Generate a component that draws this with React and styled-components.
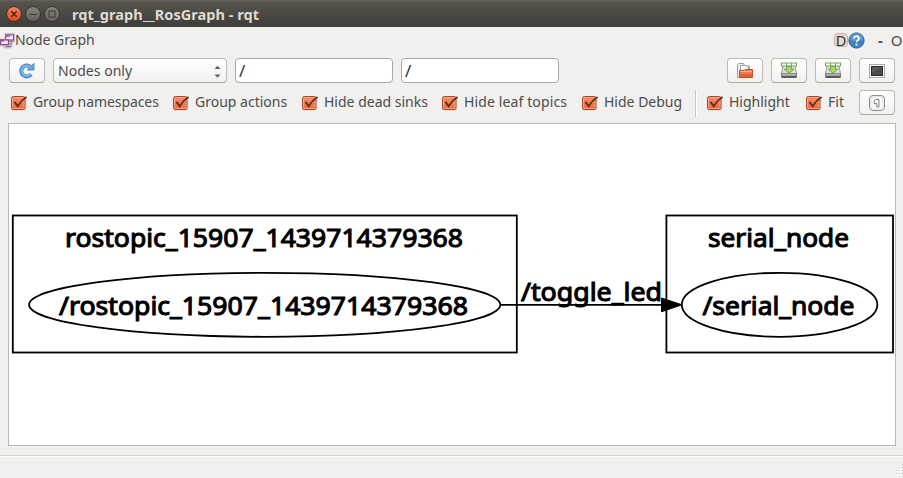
import React from "react";
import styled, { createGlobalStyle } from "styled-components";

const Global = createGlobalStyle`
  * { box-sizing: border-box; }
  html, body { margin: 0; padding: 0; overflow: hidden; background: #f1f0ee; }
  body { font-family: "Noto Sans", "Open Sans", sans-serif; font-size: 14px; color: #4c4c4c; }
`;

const Window = styled.div`
  width: 903px;
  height: 478px;
  display: flex;
  flex-direction: column;
  background: #f1f0ee;
  overflow: hidden;
`;

const TitleBar = styled.header`
  height: 27px;
  flex: none;
  display: flex;
  align-items: center;
  padding: 0 0 0 6px;
  background: linear-gradient(#62605a 0, #56544c 2px, #3e3d39 100%);
`;

const WindowButtons = styled.div`
  display: flex;
  gap: 3px;
  margin-right: 12px;
`;

const RoundButton = styled.span`
  width: 16px;
  height: 16px;
  display: grid;
  place-items: center;
  border-radius: 50%;
  border: 1px solid #35342f;
  background: ${(p) => (p.$close ? "linear-gradient(#f4805a, #dd4a1d)" : "linear-gradient(#85837c, #65635c)")};
`;

const Title = styled.h1`
  margin: 0;
  font-size: 14.5px;
  line-height: 26px;
  font-weight: 700;
  letter-spacing: ${(p) => p.$spacing}px;
  color: #dfdbd2;
  white-space: pre;
`;

const DockBar = styled.div`
  height: 27px;
  flex: none;
  display: flex;
  align-items: center;
  white-space: nowrap;
`;

const DockTitle = styled.span`
  flex: 1;
  line-height: 26px;
  padding-bottom: 2px;
  letter-spacing: ${(p) => p.$spacing}px;
`;

const DockControls = styled.div`
  display: flex;
  align-items: center;
  width: 69px;
  line-height: 24px;
  padding-bottom: 1px;
`;

const ReloadBadge = styled.span`
  width: 14px;
  height: 14px;
  border: 1px solid #c5aea2;
  border-radius: 4px;
  background: #ead8ce;
  font-size: 14.5px;
  line-height: 12px;
  display: flex;
  justify-content: center;
  color: #333;
`;

const DockText = styled.span`
  margin-left: ${(p) => p.$gap}px;
  font-size: 15px;
  font-weight: ${(p) => (p.$bold ? 700 : 400)};
`;

const Toolbar = styled.div`
  height: 33px;
  flex: none;
  display: flex;
  align-items: flex-start;
  padding: 4px 8px 0 9px;
`;

const Spacer = styled.div`
  flex: 1;
`;

const Button = styled.button`
  width: 36px;
  height: 25px;
  flex: none;
  display: grid;
  place-items: center;
  padding: 0;
  margin-left: ${(p) => p.$gap || 0}px;
  border: 1px solid #bdbbb7;
  border-bottom-color: #aaa8a4;
  border-radius: 4px;
  background: linear-gradient(#ffffff, #f1f1f0);
`;

const Combo = styled.div`
  width: 174px;
  height: 25px;
  margin-left: 8px;
  padding: 0 5px 0 4px;
  display: flex;
  align-items: center;
  justify-content: space-between;
  border: 1px solid #bdbbb7;
  border-bottom-color: #aaa8a4;
  border-radius: 4px;
  background: linear-gradient(#ffffff, #f0f0ef);
  line-height: 23px;
  letter-spacing: 0.03px;
`;

const TextInput = styled.input`
  width: 158px;
  height: 25px;
  margin-left: 8px;
  padding: 0 3px;
  border: 1px solid #a9a7a2;
  border-radius: 4px;
  background: #fff;
  font: 17px "Noto Sans", sans-serif;
  color: #333;
  outline: none;
`;

const OptionsRow = styled.div`
  height: 36px;
  flex: none;
  display: flex;
  align-items: flex-start;
  padding: 3px 8px 0 10px;
`;

const Option = styled.label`
  width: ${(p) => p.$width}px;
  height: 26px;
  flex: none;
  display: flex;
  align-items: center;
  white-space: nowrap;
`;

const OptionText = styled.span`
  margin-left: 5px;
  line-height: 24px;
  padding-bottom: 2px;
  letter-spacing: ${(p) => p.$spacing}px;
`;

const Divider = styled.div`
  width: 2px;
  height: 27px;
  margin-right: 9px;
  border-left: 1px solid #c9c7c4;
  border-right: 1px solid #fff;
`;

const Canvas = styled.main`
  height: 323px;
  flex: none;
  margin: 0 7px 0 8px;
  border: 1px solid #b9b8b4;
  background: #fff;
`;

const StatusBar = styled.footer`
  height: 23px;
  margin-top: 9px;
  flex: none;
  display: flex;
  justify-content: flex-end;
  align-items: flex-end;
  padding-bottom: 2px;
  border-top: 1px solid #d5d4d1;
  box-shadow: inset 0 1px 0 #fff;
`;

const GraphText = styled.text`
  font-family: "Noto Sans", sans-serif;
  font-size: 26px;
  fill: #000;
  stroke: #000;
  stroke-width: 1.1px;
`;

function CheckMark() {
  return (
    <svg width="18" height="18" viewBox="0 0 18 18">
      <defs>
        <linearGradient id="boxFill" x1="0" y1="0" x2="0" y2="1">
          <stop offset="0" stopColor="#f58c68" />
          <stop offset="1" stopColor="#ef6b3d" />
        </linearGradient>
      </defs>
      <rect x="1" y="2.8" width="15" height="14" rx="2" fill="#d8d6d3" />
      <rect x="1.5" y="2.5" width="13.5" height="13" rx="1.8" fill="url(#boxFill)" stroke="#a9492b" />
      <rect x="2.5" y="3.5" width="11.5" height="11" rx="1" fill="none" stroke="#fba98b" strokeWidth=".8" />
      <path d="M4.4 7.8 7.7 12.2Q11 6.4 16.6 3" fill="none" stroke="#66301f" strokeWidth="2" />
    </svg>
  );
}

function CheckOption({ label, width, spacing }) {
  return (
    <Option $width={width}>
      <CheckMark />
      <OptionText $spacing={spacing}>{label}</OptionText>
    </Option>
  );
}

function GraphIcon() {
  return (
    <svg width="15" height="16" viewBox="0 0 15 16">
      <path d="M4.5 0H15v9.5h-2.5V14L10 15.5H5L1 12.5H0V5.5h4.5z" fill="#c4c0c4" />
      <rect x="5.7" y="2" width="7.8" height="5" fill="#f6e9f6" stroke="#8c4a90" strokeWidth="1.1" />
      <rect x="5.2" y="1.5" width="4.5" height="2.5" fill="#a964ac" />
      <rect x=".6" y="7" width="7.8" height="4.6" fill="#f6e9f6" stroke="#8c3f8e" strokeWidth="1.1" />
      <rect x="0" y="6.5" width="4" height="2" fill="#9a4b9c" />
      <path d="M10 8.5h2.5M9.5 11h2.5M6 13.5h5" stroke="#77727a" strokeWidth="1" />
    </svg>
  );
}

function HelpIcon() {
  return (
    <svg width="17" height="17" viewBox="0 0 17 17">
      <circle cx="8.5" cy="8.5" r="7.6" fill="#3f82bd" stroke="#2b6395" />
      <path d="M1.8 8a6.7 6.7 0 0 1 13.4 0Q8.5 10 1.8 8z" fill="#5f99cc" />
      <path d="M6 6.5C6 3.5 11 3.5 11 6.3 11 8.2 8.5 8 8.5 10.3" fill="none" stroke="#fff" strokeWidth="1.7" />
      <rect x="7.6" y="11.6" width="1.9" height="1.9" fill="#fff" />
    </svg>
  );
}

function RefreshIcon() {
  return (
    <svg width="18" height="18" viewBox="0 0 18 18">
      <path d="M13 12.2A5.4 5.4 0 1 1 12 4.6" fill="none" stroke="#4b86bf" strokeWidth="4.2" />
      <path d="M16 1.2V8H9.2z" fill="#6ba8dc" stroke="#4b86bf" strokeWidth=".9" />
      <path d="M12.6 11.9A5 5 0 1 1 12.2 5.1" fill="none" stroke="#79b2e3" strokeWidth="2.6" />
    </svg>
  );
}

function FolderIcon() {
  return (
    <svg width="16" height="16" viewBox="0 0 16 16">
      <path d="M.5 14.5V1.5L1.5.5H7V3h5.5v11.5z" fill="#ededeb" stroke="#a3a19e" />
      <path d="M3.5 7V2.5H9L11.5 5v3" fill="#fff" stroke="#a5a3a0" />
      <path d="M2.5 7.5H7L8 6.5h7.5v8h-13z" fill="#f07a4d" stroke="#c94f22" />
      <path d="M3.3 8.5h11.4" stroke="#fbb18f" />
      <path d="M3 11h12v3H3z" fill="#e4602f" />
    </svg>
  );
}

function SaveIcon() {
  return (
    <svg width="18" height="17" viewBox="0 0 18 17">
      <path d="M3.3 2.5h11.4L16.5 12H1.5z" fill="#dfe0dd" stroke="#999b96" />
      <rect x="1.2" y="11" width="15.6" height="5" rx="1" fill="#5a5c5a" />
      <path d="M2 11.5h14v2.3H2z" fill="#b4b6b3" />
      <rect x="1.5" y="1" width="15" height="3" fill="#fff" stroke="#74a551" />
      <path d="M6.5 1v3M11.5 1v3" stroke="#74a551" />
      <path d="M6.7 4.5h4.6v2.7h2.4L9 11.3 4.3 7.2h2.4z" fill="#a6dc68" stroke="#659b36" strokeWidth=".9" />
    </svg>
  );
}

function ScreenIcon() {
  return (
    <svg width="16" height="14" viewBox="0 0 16 14">
      <rect x=".5" y=".5" width="15" height="13" fill="#fff" stroke="#aaa9a6" />
      <rect x="2.5" y="2.5" width="11" height="9" fill="#4a4b4a" stroke="#292a29" />
      <path d="M3 3h10L3 9z" fill="#5b5c5b" />
    </svg>
  );
}

function ParagraphIcon() {
  return (
    <svg width="16" height="16" viewBox="0 0 16 16">
      <rect x=".5" y=".5" width="15" height="15" rx="3.5" fill="#fafafa" stroke="#8e8e8c" />
      <rect x="1.8" y="1.8" width="12.4" height="12.4" rx="2.5" fill="none" stroke="#dededc" />
      <path d="M6.3 4.5h3.6v7.4H7.8V8.6H5.3V5.5z" fill="#fff" stroke="#787876" strokeWidth="1" />
    </svg>
  );
}

function ComboArrows() {
  return (
    <svg width="7" height="15" viewBox="0 0 7 15">
      <path d="M.5 6 3.5 2.8 6.5 6zM.5 11.5h6l-3 3.2z" fill="#5e5e5c" />
    </svg>
  );
}

function SizeGrip() {
  const dots = [[8, 0], [5, 3], [8, 3], [2, 6], [5, 6], [8, 6], [-1, 9], [2, 9], [5, 9], [8, 9]];
  return (
    <svg width="10" height="12" viewBox="-1 0 10 12">
      {dots.map(([x, y]) => (
        <g key={`${x}-${y}`}>
          <rect x={x} y={y} width="2" height="2" fill="#fff" />
          <rect x={x} y={y} width="1" height="1" fill="#bfbdba" />
        </g>
      ))}
    </svg>
  );
}

function NodeGraph() {
  return (
    <svg width="886" height="321" viewBox="9 124 886 321" display="block">
      <g fill="none" stroke="#000" strokeWidth="1.8">
        <rect x="12.8" y="215.5" width="504" height="137" />
        <rect x="666.4" y="215.5" width="226.6" height="137" />
        <ellipse cx="264.7" cy="304.8" rx="235.6" ry="32" />
        <ellipse cx="779.6" cy="304.8" rx="97.8" ry="32" />
        <path d="M500.5 304.8H663" />
      </g>
      <path d="M661.5 298 682 304.8 661.5 311.8z" stroke="#000" />
      <GraphText x="65" y="246.5" textLength="398" lengthAdjust="spacingAndGlyphs">rostopic_15907_1439714379368</GraphText>
      <GraphText x="59" y="315" textLength="409" lengthAdjust="spacingAndGlyphs">/rostopic_15907_1439714379368</GraphText>
      <GraphText x="521" y="301.2" textLength="141" lengthAdjust="spacingAndGlyphs">/toggle_led</GraphText>
      <GraphText x="708" y="246.5" textLength="141" lengthAdjust="spacingAndGlyphs">serial_node</GraphText>
      <GraphText x="702.5" y="315" textLength="152" lengthAdjust="spacingAndGlyphs">/serial_node</GraphText>
    </svg>
  );
}

export default function App() {
  return (
    <Window>
      <Global />
      <TitleBar>
        <WindowButtons>
          <RoundButton $close>
            <svg width="8" height="8" viewBox="0 0 8 8"><path d="M1.3 1.3 6.7 6.7M6.7 1.3 1.3 6.7" stroke="#4b241a" strokeWidth="1.4" /></svg>
          </RoundButton>
          <RoundButton>
            <svg width="8" height="8" viewBox="0 0 8 8"><path d="M.5 4.5h7" stroke="#3a3934" /></svg>
          </RoundButton>
          <RoundButton>
            <svg width="8" height="8" viewBox="0 0 8 8"><rect x="1" y="1" width="6" height="6" fill="none" stroke="#3a3934" /></svg>
          </RoundButton>
        </WindowButtons>
        <Title $spacing={0.05}>rqt_graph__RosGraph - rqt</Title>
      </TitleBar>
      <DockBar>
        <GraphIcon />
        <DockTitle $spacing={-0.05}>Node Graph</DockTitle>
        <DockControls>
          <ReloadBadge>D</ReloadBadge>
          <HelpIcon />
          <DockText $gap={13} $bold>-</DockText>
          <DockText $gap={8}>O</DockText>
        </DockControls>
      </DockBar>
      <Toolbar>
        <Button><RefreshIcon /></Button>
        <Combo>Nodes only<ComboArrows /></Combo>
        <TextInput defaultValue="/" />
        <TextInput defaultValue="/" />
        <Spacer />
        <Button><FolderIcon /></Button>
        <Button $gap={8}><SaveIcon /></Button>
        <Button $gap={8}><SaveIcon /></Button>
        <Button $gap={8}><ScreenIcon /></Button>
      </Toolbar>
      <OptionsRow>
        <CheckOption label="Group namespaces" width={162} spacing={-0.08} />
        <CheckOption label="Group actions" width={129} spacing={0} />
        <CheckOption label="Hide dead sinks" width={140} spacing={0} />
        <CheckOption label="Hide leaf topics" width={140} spacing={0.12} />
        <CheckOption label="Hide Debug" width={114} spacing={0} />
        <Divider />
        <CheckOption label="Highlight" width={99} spacing={0} />
        <CheckOption label="Fit" width={50} spacing={0.1} />
        <Spacer />
        <Button><ParagraphIcon /></Button>
      </OptionsRow>
      <Canvas><NodeGraph /></Canvas>
      <StatusBar><SizeGrip /></StatusBar>
    </Window>
  );
}
